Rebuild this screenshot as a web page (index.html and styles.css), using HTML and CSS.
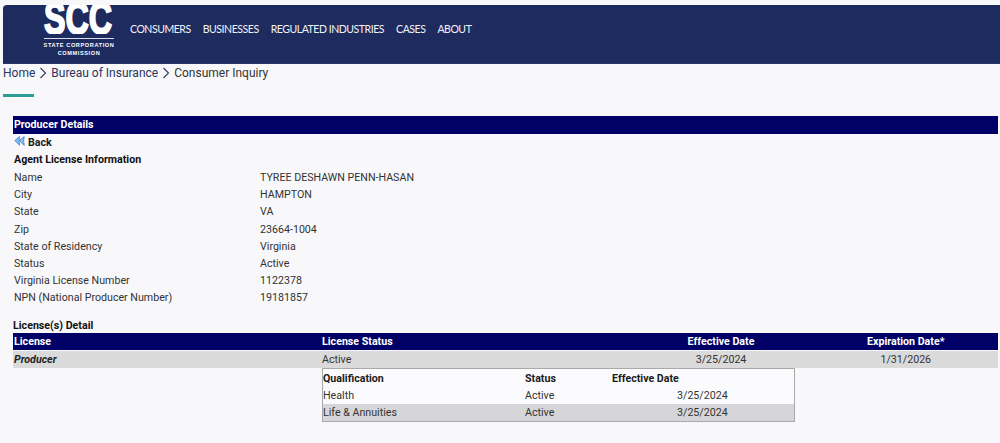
FILE: index.html
```html
<!DOCTYPE html>
<html lang="en">
<head>
<meta charset="utf-8">
<title>Producer Details</title>
<link rel="stylesheet" href="styles.css">
</head>
<body>
<header class="site-header">
  <div class="logo">
    <div class="logo-clip"><div class="logo-mark">SCC</div></div>
    <div class="logo-rule"></div>
    <div class="logo-line">STATE CORPORATION</div>
    <div class="logo-line">COMMISSION</div>
  </div>
  <nav class="nav">
    <a>CONSUMERS</a><a>BUSINESSES</a><a>REGULATED INDUSTRIES</a><a>CASES</a><a>ABOUT</a>
  </nav>
</header>
<div class="crumbs">
  <a>Home</a>
  <svg class="chev" width="8" height="12" viewBox="0 0 8 12"><path d="M1.5 1 L6.5 6 L1.5 11" fill="none" stroke="#333c5c" stroke-width="1.1"/></svg>
  <a>Bureau of Insurance</a>
  <svg class="chev" width="8" height="12" viewBox="0 0 8 12"><path d="M1.5 1 L6.5 6 L1.5 11" fill="none" stroke="#333c5c" stroke-width="1.1"/></svg>
  <span>Consumer Inquiry</span>
</div>
<div class="accent"></div>
<main class="content">
  <h1 class="bar">Producer Details</h1>
  <div class="back">
    <svg width="11" height="10" viewBox="0 0 11 10"><path d="M5.6 0.6 L0.8 4.6 L5.6 9.2 L5 5 Z M10.2 0.6 L5.4 4.6 L10.2 9.4 L9.6 4.8 Z" fill="#8fc0ee" stroke="#3f86d4" stroke-width="0.9" stroke-linejoin="round"/></svg>
    <b>Back</b>
  </div>
  <h2 class="sub">Agent License Information</h2>
  <dl class="info">
    <dt>Name</dt><dd>TYREE DESHAWN PENN-HASAN</dd>
    <dt>City</dt><dd>HAMPTON</dd>
    <dt>State</dt><dd>VA</dd>
    <dt>Zip</dt><dd>23664-1004</dd>
    <dt>State of Residency</dt><dd>Virginia</dd>
    <dt>Status</dt><dd>Active</dd>
    <dt>Virginia License Number</dt><dd>1122378</dd>
    <dt>NPN (National Producer Number)</dt><dd>19181857</dd>
  </dl>
  <h2 class="sub detail">License(s) Detail</h2>
  <div class="lic-row lic-head">
    <div>License</div><div>License Status</div><div class="c">Effective Date</div><div class="c">Expiration Date*</div>
  </div>
  <div class="lic-row lic-body">
    <div class="prod">Producer</div><div>Active</div><div class="c">3/25/2024</div><div class="c">1/31/2026</div>
  </div>
  <div class="quals">
    <div class="q-row q-head"><div>Qualification</div><div>Status</div><div>Effective Date</div></div>
    <div class="q-row"><div>Health</div><div>Active</div><div class="r">3/25/2024</div></div>
    <div class="q-row q-alt"><div>Life &amp; Annuities</div><div>Active</div><div class="r">3/25/2024</div></div>
  </div>
</main>
</body>
</html>
```
FILE: styles.css
```css
* { box-sizing: border-box; }
html, body { margin: 0; padding: 0; }
body {
  width: 1000px;
  height: 443px;
  overflow: hidden;
  background: #f8f8fb;
  font-family: Roboto, "Liberation Sans", sans-serif;
  font-size: 10.67px;
  color: #333;
  padding-top: 5px;
}
.site-header {
  margin-left: 3px;
  height: 58.5px;
  background: #1e2b5e;
  border-top-left-radius: 4px;
  display: flex;
  align-items: center;
  overflow: hidden;
  box-shadow: inset 0 -1px 0 #2a3570;
}
.logo {
  width: 72px;
  margin-left: 40px;
  height: 58px;
  color: #fff;
  text-align: center;
  flex: none;
}
.logo-clip { height: 29px; overflow: hidden; }
.logo-mark {
  font-family: "Liberation Sans", sans-serif;
  font-weight: 700;
  font-size: 46px;
  line-height: 40px;
  width: 100px;
  margin: -7px 0 0 -15.5px;
  white-space: nowrap;
  transform: scaleX(0.7);
  -webkit-text-stroke: 2px #fff;
}
.logo-rule { height: 1px; background: #d8dbe6; margin: 4px 1px 3px; }
.logo-line {
  font-family: "Liberation Sans", sans-serif;
  font-weight: 700;
  font-size: 5.6px;
  line-height: 7.5px;
  letter-spacing: 0.6px;
  white-space: nowrap;
}
.nav {
  display: flex;
  gap: 12px;
  margin-left: 15px;
  margin-top: -10px;
  color: #f2f3f8;
  font-family: Lato, Roboto, sans-serif;
  font-size: 10.5px;
  letter-spacing: -0.45px;
}
.crumbs {
  margin-left: 3px;
  height: 20px;
  display: flex;
  align-items: center;
  gap: 4px;
  font-size: 12px;
  color: #2a3560;
  margin-top: -0.5px;
}
.crumbs span { color: #333; }
.accent { margin: 11px 0 0 3px; width: 31px; height: 2.5px; background: #2a9d96; }
.content { padding: 0 2.5px 0 13px; margin-top: 19.5px; }
.bar {
  margin: 0;
  height: 17.5px;
  line-height: 18px;
  padding-left: 1px;
  background: #000066;
  color: #fff;
  font-size: inherit;
  font-weight: 700;
}
.back {
  height: 18px;
  display: flex;
  align-items: center;
  gap: 3px;
  padding-left: 1px;
  color: #1c1c1c;
}
.back svg { margin-top: -3px; }
.sub {
  margin: 0;
  font-size: inherit;
  font-weight: 700;
  color: #111;
  height: 17.5px;
  line-height: 15.5px;
  padding-left: 1px;
}
.info {
  margin: 0;
  display: grid;
  grid-template-columns: 246px 1fr;
  grid-auto-rows: 17.2px;
  line-height: 17.2px;
  padding-left: 1px;
}
.info dd { margin: 0; }
.detail { margin-top: 12.5px; padding-left: 0; height: 14px; line-height: 14px; }
.lic-row {
  display: grid;
  grid-template-columns: 308px 306px 186px 1fr;
  height: 17px;
  line-height: 17px;
  padding-left: 1px;
}
.lic-row .c { text-align: center; }
.lic-head { background: #000066; color: #fff; font-weight: 700; }
.lic-body { background: #dadada; margin-top: 0.5px; }
.prod { font-style: italic; font-weight: 700; color: #222; }
.quals {
  margin: 0.5px 0 0 309px;
  width: 473px;
  border: 1px solid #a9a9a9;
  background: #fbfbfd;
  padding-top: 0.6px;
}
.q-row {
  display: grid;
  grid-template-columns: 202px 87px 1fr;
  height: 17px;
  line-height: 17px;
}
.q-head { font-weight: 700; color: #1a1a1a; }
.q-alt { background: #d6d6d8; }
.q-row .r { padding-left: 65px; }
```
